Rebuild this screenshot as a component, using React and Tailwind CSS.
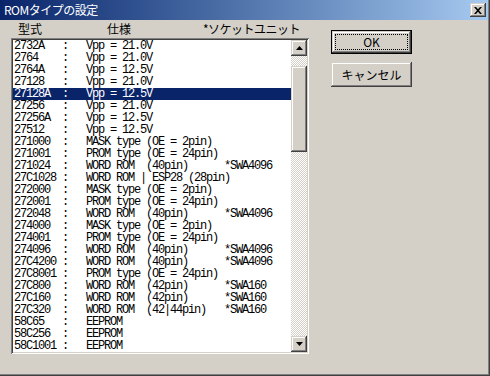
import React from 'react';

const rows = [
  ['2732A', 'Vpp = 21.0V'],
  ['2764', 'Vpp = 21.0V'],
  ['2764A', 'Vpp = 12.5V'],
  ['27128', 'Vpp = 21.0V'],
  ['27128A', 'Vpp = 12.5V'],
  ['27256', 'Vpp = 21.0V'],
  ['27256A', 'Vpp = 12.5V'],
  ['27512', 'Vpp = 12.5V'],
  ['271000', 'MASK type (OE = 2pin)'],
  ['271001', 'PROM type (OE = 24pin)'],
  ['271024', 'WORD ROM  (40pin)', '*SWA4096'],
  ['27C1028', 'WORD ROM | ESP28 (28pin)'],
  ['272000', 'MASK type (OE = 2pin)'],
  ['272001', 'PROM type (OE = 24pin)'],
  ['272048', 'WORD ROM  (40pin)', '*SWA4096'],
  ['274000', 'MASK type (OE = 2pin)'],
  ['274001', 'PROM type (OE = 24pin)'],
  ['274096', 'WORD ROM  (40pin)', '*SWA4096'],
  ['27C4200', 'WORD ROM  (40pin)', '*SWA4096'],
  ['27C8001', 'PROM type (OE = 24pin)'],
  ['27C800', 'WORD ROM  (42pin)', '*SWA160'],
  ['27C160', 'WORD ROM  (42pin)', '*SWA160'],
  ['27C320', 'WORD ROM  (42|44pin)', '*SWA160'],
  ['58C65', 'EEPROM'],
  ['58C256', 'EEPROM'],
  ['58C1001', 'EEPROM'],
];

const SELECTED = 4;

const raised =
  'shadow-[inset_-1px_-1px_#404040,inset_1px_1px_#d4d0c8,inset_-2px_-2px_#808080,inset_2px_2px_#ffffff]';

function Arrow({ up }) {
  return (
    <svg width="7" height="4" viewBox="0 0 7 4" className="block">
      {up ? <path d="M3.5 0 L7 4 L0 4 Z" fill="#000" /> : <path d="M0 0 L7 0 L3.5 4 Z" fill="#000" />}
    </svg>
  );
}

function line(r) {
  return r[0].padEnd(8) + ':   ' + r[1].padEnd(23) + (r[2] || '');
}

export default function App() {
  return (
    <div
      className="w-[490px] h-[376px] bg-[#d4d0c8] flex flex-col pr-[2px] pb-[2px] shadow-[inset_-1px_-1px_#404040,inset_-2px_-2px_#808080] text-black"
      style={{ fontFamily: '"Noto Sans CJK JP", "Liberation Sans", sans-serif' }}
    >
      {/* title bar */}
      <div className="h-[20px] flex items-center justify-between pl-[4px] pr-[2px] bg-gradient-to-r from-[#0a246a] to-[#a6caf0]">
        <span className="text-white text-[12px] leading-[14px] tracking-[-0.5px]">ROMタイプの設定</span>
        <div className={`w-[16px] h-[14px] bg-[#d4d0c8] flex items-center justify-center ${raised}`}>
          <svg width="8" height="7" viewBox="0 0 8 7" className="block">
            <path d="M0 0h2l2 2.2L6 0h2L5 3.5 8 7H6L4 4.8 2 7H0l3-3.5z" fill="#000" />
          </svg>
        </div>
      </div>

      <div className="flex flex-1 pl-[11px]">
        {/* list column */}
        <div className="w-[298px] flex flex-col">
          <div className="h-[18px] flex items-center text-[12px] leading-[14px] pl-[7px]">
            <span className="w-[89px]">型式</span>
            <span className="w-[96px]">仕様</span>
            <span className="tracking-[-0.5px]">*ソケットユニット</span>
          </div>
          <div className="h-[316px] p-[2px] flex shadow-[inset_1px_1px_#808080,inset_-1px_-1px_#ffffff,inset_2px_2px_#404040,inset_-2px_-2px_#d4d0c8]">
            <div
              className="flex-1 bg-white overflow-hidden text-[12px] tracking-[-1.2px]"
              style={{ fontFamily: '"Liberation Mono", "DejaVu Sans Mono", monospace' }}
            >
              {rows.map((r, i) => (
                <div
                  key={r[0]}
                  className={`h-[12px] leading-[12px] pl-[1px] whitespace-pre ${
                    i === SELECTED ? 'bg-[#0a246a] text-white' : ''
                  }`}
                >
                  {line(r)}
                </div>
              ))}
            </div>
            {/* scrollbar */}
            <div className="w-[16px] flex flex-col">
              <div className={`h-[16px] bg-[#d4d0c8] flex items-center justify-center ${raised}`}>
                <Arrow up />
              </div>
              <div className="flex-1 flex flex-col bg-[conic-gradient(#ffffff_25%,#d4d0c8_0_50%,#ffffff_0_75%,#d4d0c8_0)] bg-size-[2px_2px]">
                <div className="h-[10px]" />
                <div className={`h-[86px] bg-[#d4d0c8] ${raised}`} />
              </div>
              <div className={`h-[16px] bg-[#d4d0c8] flex items-center justify-center ${raised}`}>
                <Arrow />
              </div>
            </div>
          </div>
        </div>

        {/* buttons */}
        <div className="ml-[22px] pt-[10px] flex flex-col gap-[8px] text-[12px]">
          <div className="w-[81px] h-[24px] border border-black">
            <div className={`w-full h-full p-[3px] ${raised}`}>
              <div className="w-full h-full border border-dotted border-black flex items-center justify-center leading-none">
                OK
              </div>
            </div>
          </div>
          <div className={`w-[81px] h-[25px] flex items-center justify-center leading-none ${raised}`}>
            キャンセル
          </div>
        </div>
      </div>
    </div>
  );
}
